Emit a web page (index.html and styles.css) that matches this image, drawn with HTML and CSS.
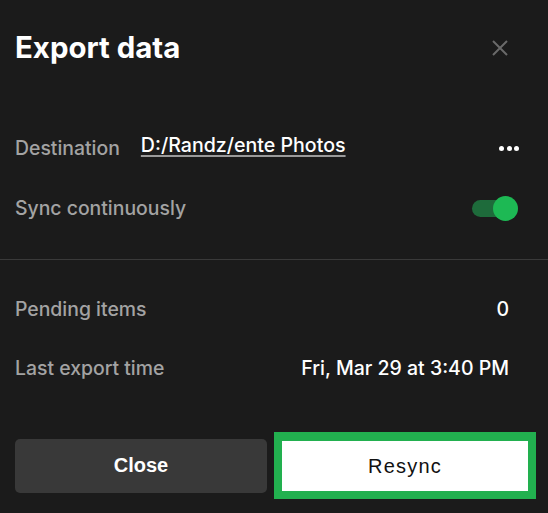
FILE: index.html
```html
<!DOCTYPE html>
<html lang="en">
<head>
<meta charset="utf-8">
<title>Export data</title>
<link rel="stylesheet" href="styles.css">
</head>
<body>
<div class="dialog">
  <header class="header">
    <h1 class="title">Export data</h1>
    <button class="close-x" aria-label="Close">
      <svg width="16" height="16" viewBox="0 0 16 16"><path d="M1 1L15 15M15 1L1 15" stroke="#6a6a6a" stroke-width="2" fill="none"/></svg>
    </button>
  </header>
  <section class="section top">
    <div class="row">
      <span class="label">Destination</span>
      <a class="path">D:/Randz/ente Photos</a>
      <span class="spacer"></span>
      <span class="dots"><i></i><i></i><i></i></span>
    </div>
    <div class="row">
      <span class="label">Sync continuously</span>
      <span class="spacer"></span>
      <span class="toggle"><span class="track"></span><span class="thumb"></span></span>
    </div>
  </section>
  <hr class="divider">
  <section class="section bottom">
    <div class="row">
      <span class="label">Pending items</span>
      <span class="spacer"></span>
      <span class="value">0</span>
    </div>
    <div class="row">
      <span class="label">Last export time</span>
      <span class="spacer"></span>
      <span class="value">Fri, Mar 29 at 3:40 PM</span>
    </div>
  </section>
  <footer class="footer">
    <button class="btn btn-close">Close</button>
    <div class="focus-ring"><button class="btn btn-resync">Resync</button></div>
  </footer>
</div>
</body>
</html>
```
FILE: styles.css
```css
html, body {
  margin: 0;
  padding: 0;
  background: #1b1b1b;
}
body {
  font-family: "Inter", "Noto Sans", sans-serif;
  color: #fff;
  width: 548px;
  height: 513px;
  overflow: hidden;
}
.header {
  height: 96px;
  display: flex;
  align-items: center;
  justify-content: space-between;
  padding: 0 40px 0 15px;
}
.title {
  margin: 0;
  font-size: 29.4px;
  font-weight: 700;
  line-height: 34px;
  color: #fff;
}
.close-x {
  background: none;
  border: 0;
  padding: 0;
  width: 16px;
  height: 16px;
  display: flex;
}
.section.top {
  padding: 22px 0 21px 15px;
}
.section.bottom {
  padding: 19px 0 35px 15px;
}
.row {
  display: flex;
  align-items: center;
  height: 60px;
}
.section.top .row:first-child {
  padding-right: 29px;
}
.section.top .row:nth-child(2) {
  padding-right: 30px;
}
.section.bottom .row {
  padding-right: 39px;
  height: 59px;
}
.label {
  font-size: 19.4px;
  font-weight: 500;
  color: #a3a3a3;
}
.path {
  margin-left: 21px;
  font-size: 19.6px;
  font-weight: 500;
  color: #fff;
  text-decoration: underline;
  text-decoration-color: #9a9a9a;
  text-underline-offset: 3px;
  text-decoration-thickness: 2px;
  position: relative;
  top: -3px;
}
.spacer { flex: 1; }
.dots {
  display: flex;
  gap: 2.5px;
}
.dots i {
  width: 5px;
  height: 5px;
  border-radius: 50%;
  background: #fff;
}
.toggle {
  position: relative;
  width: 46px;
  height: 25px;
}
.toggle .track {
  position: absolute;
  left: 0;
  top: 4px;
  width: 38px;
  height: 17px;
  border-radius: 9px;
  background: #1e6b3b;
}
.toggle .thumb {
  position: absolute;
  right: 0;
  top: 0;
  width: 25px;
  height: 25px;
  border-radius: 50%;
  background: #1db954;
}
.value {
  font-size: 19.5px;
  font-weight: 500;
  color: #fff;
}
.divider {
  margin: 0;
  border: 0;
  height: 1px;
  background: #3a3a3a;
}
.footer {
  display: flex;
  align-items: center;
  padding: 0 12px 0 15px;
  gap: 7px;
}
.btn {
  border: 0;
  font-family: "Liberation Sans", Arial, sans-serif;
  font-size: 20px;
  cursor: pointer;
}
.btn-close {
  width: 252px;
  height: 54px;
  border-radius: 5px;
  background: #393939;
  color: #fff;
  font-weight: 700;
}
.focus-ring {
  border: 8px solid #22b04f;
  border-top-width: 9px;
  background: #22b04f;
  display: flex;
}
.btn-resync {
  width: 246px;
  height: 50px;
  background: #fff;
  color: #111;
  font-weight: 400;
  letter-spacing: 1.2px;
}
```
